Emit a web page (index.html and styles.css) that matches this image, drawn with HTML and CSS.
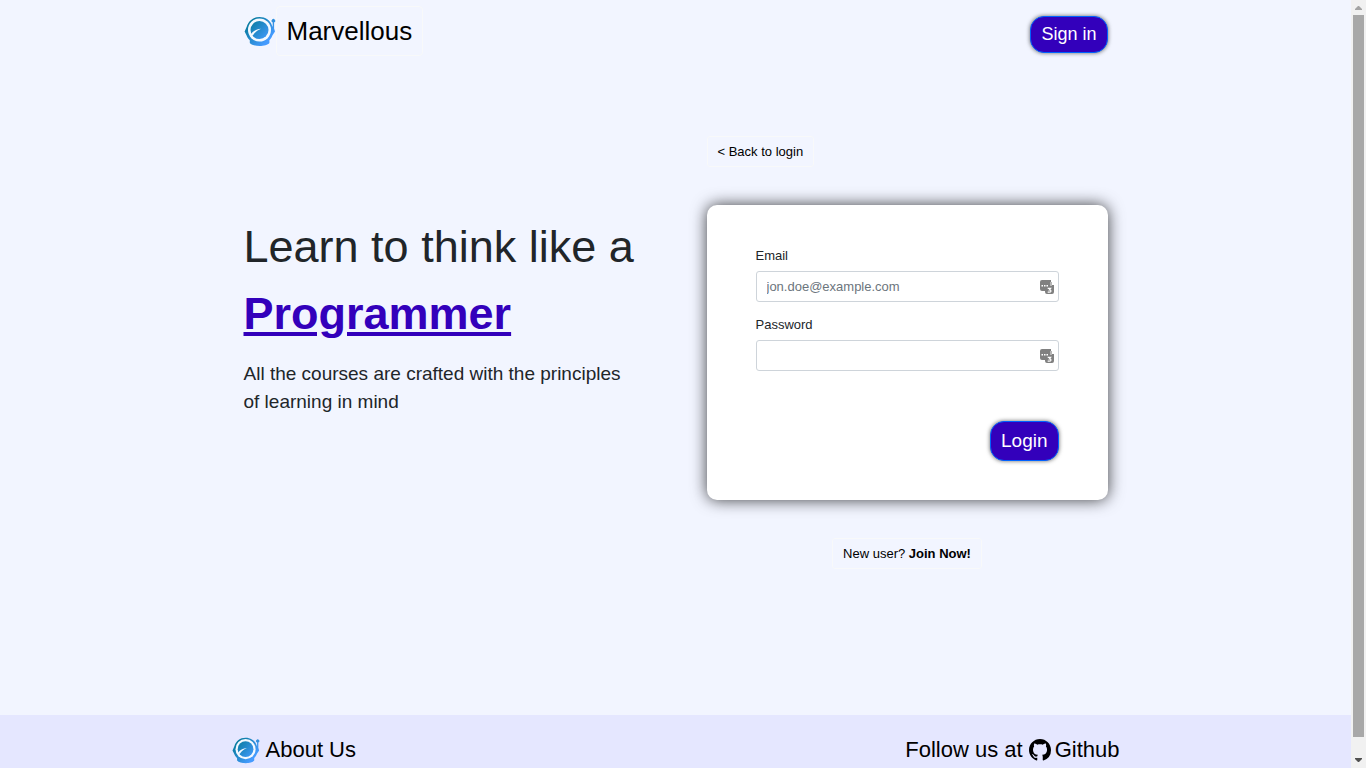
FILE: index.html
```html
<!DOCTYPE html>
<html lang="en">
<head>
<meta charset="utf-8">
<meta name="viewport" content="width=device-width, initial-scale=1">
<title>Marvellous</title>
<link rel="stylesheet" href="styles.css">
</head>
<body>
<svg class="defs" aria-hidden="true">
  <defs>
    <linearGradient id="blue" gradientUnits="userSpaceOnUse" x1="5" y1="6" x2="25" y2="24">
      <stop offset="0" stop-color="#067a9c"/>
      <stop offset="1" stop-color="#459bff"/>
    </linearGradient>
    <symbol id="helmet" viewBox="0 0 32 32">
      <path fill="url(#blue)" d="M15.5 2C21.5 2 26.3 5.4 28 10.4L28.7 12V7.4A1.8 1.8 0 1 1 30.1 7.4V13.5L31 16.5L28.4 20.5C27.6 22.6 26.6 24 25.4 25.2V28C22.4 32 9 32 5.8 28V25.2C4.4 24 3.4 22.6 2.6 20.5L.6 16.5L2.8 11.5C4.4 5.8 9.3 2 15.5 2Z"/>
      <circle cx="15.5" cy="15" r="11.5" fill="#f4f9ff"/>
      <circle cx="15.5" cy="15" r="9" fill="url(#blue)"/>
      <path fill="#f4f9ff" d="M6.5 20.5C7.6 16.5 11.6 14.4 17 13.7C13.8 15.3 11.2 16.6 9 20.2Z"/>
    </symbol>
    <symbol id="keeper" viewBox="0 0 14 15">
      <path fill="#808080" d="M2 1H11V6H14V13Q14 15 12 15H7Q5 15 5 13V12H2Q0 12 0 10V3Q0 1 2 1Z"/>
      <path fill="#b5b5b5" d="M10 3H12V7H10Z"/>
      <path fill="#fff" d="M1.5 6H3V7.5H1.5ZM4 6H5.5V7.5H4ZM6.5 6H8V7.5H6.5Z"/>
      <path fill="none" stroke="#fff" stroke-width="1.2" d="M7.7 9.3H10.7L9.4 11Q11.1 11 10.9 12.3Q10.7 13.5 7.7 13.1"/>
    </symbol>
  </defs>
</svg>
<div class="app">
  <div class="page">
    <header class="navbar">
      <a class="brand" href="#">
        <svg class="brand-logo" aria-hidden="true"><use href="#helmet"/></svg>
        <span class="ghost brand-name">Marvellous</span>
      </a>
      <button class="primary signin" type="button">Sign in</button>
    </header>
    <main class="hero">
      <section class="pitch">
        <h1>Learn to think like a<br><strong>Programmer</strong></h1>
        <p>All the courses are crafted with the principles of learning in mind</p>
      </section>
      <section class="access">
        <button class="ghost back" type="button">&lt; Back to login</button>
        <form class="card">
          <label for="email">Email</label>
          <div class="field">
            <input id="email" type="email" placeholder="jon.doe@example.com">
            <svg class="field-icon" aria-hidden="true"><use href="#keeper"/></svg>
          </div>
          <label for="password">Password</label>
          <div class="field">
            <input id="password" type="password">
            <svg class="field-icon" aria-hidden="true"><use href="#keeper"/></svg>
          </div>
          <button class="primary login" type="button">Login</button>
        </form>
        <button class="ghost join" type="button">New user? <strong>Join Now!</strong></button>
      </section>
    </main>
    <footer class="footer">
      <div class="footer-inner">
        <a class="about" href="#"><svg class="about-logo" aria-hidden="true"><use href="#helmet"/></svg>About Us</a>
        <a class="follow" href="#">Follow us at
          <svg class="github" viewBox="0 0 16 16" aria-hidden="true"><path d="M8 0C3.58 0 0 3.58 0 8c0 3.54 2.29 6.53 5.47 7.59.4.07.55-.17.55-.38 0-.19-.01-.82-.01-1.49-2.01.37-2.53-.49-2.69-.94-.09-.23-.48-.94-.82-1.13-.28-.15-.68-.52-.01-.53.63-.01 1.08.58 1.23.82.72 1.21 1.87.87 2.33.66.07-.52.28-.87.51-1.07-1.78-.2-3.64-.89-3.64-3.95 0-.87.31-1.59.82-2.15-.08-.2-.36-1.02.08-2.12 0 0 .67-.21 2.2.82.64-.18 1.32-.27 2-.27s1.36.09 2 .27c1.53-1.04 2.2-.82 2.2-.82.44 1.1.16 1.92.08 2.12.51.56.82 1.27.82 2.15 0 3.07-1.87 3.75-3.65 3.95.29.25.54.73.54 1.48 0 1.07-.01 1.93-.01 2.2 0 .21.15.46.55.38A8.01 8.01 0 0 0 16 8c0-4.42-3.58-8-8-8z"/></svg>Github</a>
      </div>
    </footer>
  </div>
  <div class="scrollbar" aria-hidden="true">
    <svg class="arrow" viewBox="0 0 15 15"><path fill="#a3a3a3" d="M7 6H8L11 9V10H4V9Z"/></svg>
    <div class="thumb"></div>
    <svg class="arrow" viewBox="0 0 15 15"><path fill="#505050" d="M4 5H11V6L8 9H7L4 6Z"/></svg>
  </div>
</div>
</body>
</html>
```
FILE: styles.css
```css
* {
  box-sizing: border-box;
}

body {
  margin: 0;
  background: #f2f5ff;
  color: #212529;
  font: 13px/19px "Liberation Sans", Arial, sans-serif;
}

a {
  color: #000;
  text-decoration: none;
}

button,
input {
  font: inherit;
}

.defs {
  position: absolute;
  width: 0;
  height: 0;
}

.app {
  display: flex;
  height: 100vh;
}

.page {
  flex: 1;
  min-width: 0;
  overflow-y: auto;
  scrollbar-width: none;
}

.navbar,
.hero {
  max-width: 864px;
  margin: 0 auto;
}

.navbar {
  display: flex;
  align-items: flex-start;
  justify-content: space-between;
  padding-top: 6px;
}

.brand {
  display: flex;
  align-items: center;
}

.brand-logo {
  width: 32px;
  height: 32px;
}

.ghost {
  padding: 5px 10px;
  border: 1px solid #f8f9fa;
  border-radius: 3px;
  background: transparent;
  color: #000;
}

.brand-name {
  border-radius: 4px;
  font-size: 26px;
  line-height: 38px;
}

.primary {
  border: 1px solid #0062ff;
  background: #3300bb;
  color: #fff;
  box-shadow: 0 0 4px rgba(0, 0, 0, 0.6);
}

.signin {
  margin-top: 10px;
  padding: 4px 10px;
  border-radius: 14px;
  font-size: 18px;
  line-height: 27px;
}

.hero {
  display: grid;
  grid-template-columns: 1fr 1fr;
  column-gap: 62px;
  padding: 80px 0 146px;
}

.pitch {
  padding-top: 77px;
}

h1 {
  margin: 0 0 13px;
  font-size: 45px;
  font-weight: 400;
  line-height: 67px;
}

h1 strong {
  color: #3300bb;
  text-decoration: underline;
}

.pitch p {
  margin: 0;
  padding-right: 12px;
  font-size: 19px;
  line-height: 28px;
}

.access {
  display: flex;
  flex-direction: column;
  align-items: flex-start;
}

.card {
  display: flex;
  flex-direction: column;
  align-self: stretch;
  margin: 38px 0;
  padding: 41px 49px 39px;
  border-radius: 10px;
  background: #fff;
  box-shadow: 0 0 16px rgba(0, 0, 0, 0.75);
}

.card label {
  margin-bottom: 6px;
}

.field {
  position: relative;
  margin-bottom: 13px;
}

.field input {
  display: block;
  width: 100%;
  height: 31px;
  padding: 5px 10px;
  border: 1px solid #ced4da;
  border-radius: 3px;
  background: #fff;
}

.field input::placeholder {
  color: #6c757d;
}

.field-icon {
  position: absolute;
  top: 8px;
  right: 5px;
  width: 14px;
  height: 15px;
}

.login {
  align-self: flex-end;
  margin-top: 37px;
  padding: 5px 10px;
  border-radius: 14px;
  font-size: 19px;
  line-height: 28px;
}

.join {
  align-self: center;
}

.footer {
  padding: 20px 12px 19px;
  background: #e5e7ff;
}

.footer-inner {
  display: flex;
  justify-content: space-between;
  max-width: 888px;
  margin: 0 auto;
  font-size: 22px;
  line-height: 30px;
}

.about,
.follow {
  display: flex;
  align-items: center;
}

.about {
  gap: 6px;
}

.about-logo {
  width: 28px;
  height: 28px;
}

.github {
  width: 22px;
  height: 22px;
  margin: 0 4px 0 6px;
}

.scrollbar {
  display: flex;
  flex-direction: column;
  width: 15px;
  background: #f1f1f1;
}

.arrow {
  width: 15px;
  height: 15px;
}

.thumb {
  flex: 1;
  margin: 0 2px 16px;
  background: #a8a8a8;
}
```
